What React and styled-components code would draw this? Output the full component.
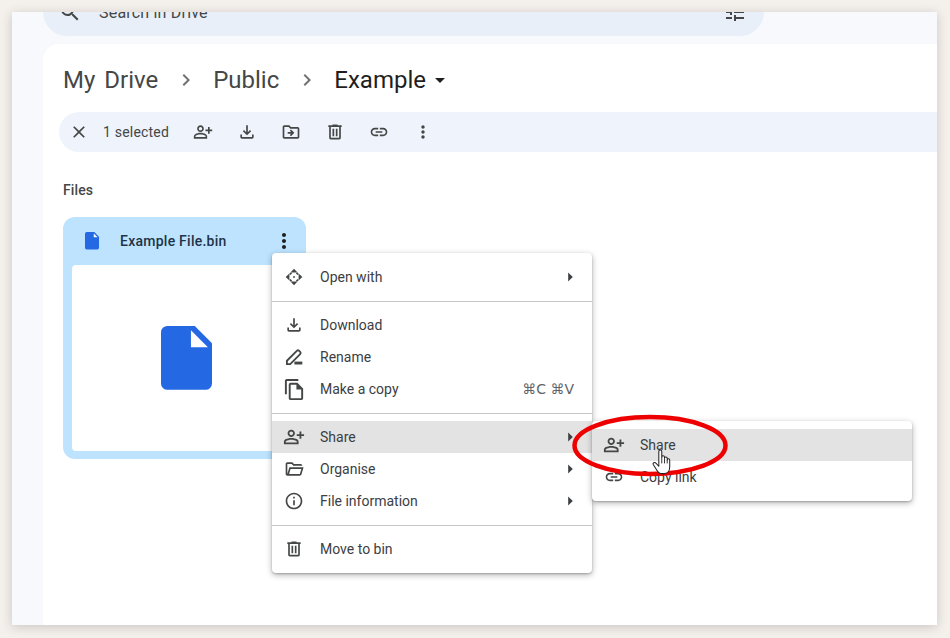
import React from 'react';
import styled, { createGlobalStyle } from 'styled-components';
import {
  MdSearch, MdTune, MdChevronRight, MdArrowDropDown, MdClose, MdOutlinePersonAddAlt,
  MdOutlineFileDownload, MdOutlineDriveFileMove, MdLink, MdMoreVert,
  MdOutlineFileCopy, MdInfoOutline, MdArrowRight,
} from 'react-icons/md';

const GlobalStyle = createGlobalStyle`
  html, body {
    margin: 0;
    padding: 0;
    background: #f4f0ec;
    font-family: Roboto, "Liberation Sans", sans-serif;
    color: #444746;
  }
`;

const Backdrop = styled.div`
  width: 950px;
  height: 638px;
  padding: 12px 13px 13px 12px;
  box-sizing: border-box;
  overflow: hidden;
`;

const Window = styled.div`
  position: relative;
  height: 100%;
  padding-left: 31px;
  box-sizing: border-box;
  background: #f7f9fd;
  box-shadow: 0 2px 10px rgba(60, 50, 40, 0.22);
  overflow: hidden;
`;

const SearchBar = styled.div`
  width: 721px;
  height: 48px;
  margin-top: -24px;
  padding: 0 17px 0 15px;
  box-sizing: border-box;
  display: flex;
  align-items: center;
  gap: 17px;
  border-radius: 24px;
  background: #e9eff9;
  font-size: 16px;
  letter-spacing: 0.2px;
  color: #444746;
  svg { font-size: 24px; flex: none; }
  span { flex: 1; }
`;

const Panel = styled.main`
  margin-top: 8px;
  height: 600px;
  padding: 16px 0 0 20px;
  background: #fff;
  border-top-left-radius: 16px;
`;

const Crumbs = styled.div`
  height: 40px;
  display: flex;
  align-items: center;
  font-size: 24px;
  word-spacing: 3px;
  color: #444746;
`;

const CrumbSep = styled.span`
  display: flex;
  margin: 0 15px 0 16px;
  font-size: 24px;
  color: #6f7271;
`;

const Current = styled.span`
  color: #1f1f1f;
`;

const Caret = styled.span`
  display: flex;
  font-size: 24px;
  margin-left: 2px;
  color: #1f1f1f;
`;

const ActionBar = styled.div`
  height: 40px;
  margin: 12px 0 0 -4px;
  padding-left: 8px;
  display: flex;
  align-items: center;
  background: #eef3fc;
  border-radius: 20px 0 0 20px;
  font-size: 14px;
`;

const Selected = styled.span`
  margin: 0 12px 0 12px;
  width: 66px;
  white-space: nowrap;
  color: #444746;
  letter-spacing: 0.2px;
`;

const ActionIcon = styled.span`
  width: 44px;
  display: flex;
  justify-content: center;
  font-size: 20px;
  color: #444746;
`;

const CloseIcon = styled(ActionIcon)`
  width: 24px;
`;

const SectionTitle = styled.h2`
  margin: 28px 0 17px;
  font-size: 14px;
  line-height: 20px;
  font-weight: 500;
  letter-spacing: 0.1px;
  color: #444746;
`;

const Card = styled.div`
  width: 243px;
  height: 242px;
  padding: 0 9px 8px;
  box-sizing: border-box;
  display: flex;
  flex-direction: column;
  background: #bde3ff;
  border-radius: 12px;
`;

const CardHead = styled.div`
  height: 48px;
  flex: none;
  display: flex;
  align-items: center;
  padding-left: 13px;
  font-size: 14px;
  font-weight: 500;
  letter-spacing: 0.25px;
  color: #1f3347;
  span { flex: 1; margin-left: 21px; }
  > svg:last-child { font-size: 24px; margin-right: 1px; color: #1f1f1f; flex: none; }
`;

const Preview = styled.div`
  flex: 1;
  display: flex;
  align-items: center;
  justify-content: center;
  background: #fff;
  border-radius: 4px;
  padding-left: 3px;
`;

const Menu = styled.div`
  position: absolute;
  left: ${p => p.$left}px;
  top: ${p => p.$top}px;
  width: 320px;
  padding: 8px 0;
  box-sizing: border-box;
  background: #fff;
  border-radius: 4px;
  box-shadow: 0 2px 6px rgba(0, 0, 0, 0.3), 0 1px 2px rgba(0, 0, 0, 0.2);
`;

const Row = styled.div`
  height: 32px;
  display: flex;
  align-items: center;
  padding: 0 16px 0 10px;
  font-size: 14px;
  color: #3c4043;
  background: ${p => (p.$active ? '#e3e3e3' : 'transparent')};
  > span:nth-child(2) { flex: 1; }
`;

const RowIcon = styled.span`
  width: 24px;
  margin-right: 14px;
  display: flex;
  justify-content: center;
  font-size: ${p => p.$size || 20}px;
  color: #444746;
`;

const Arrow = styled.span`
  display: flex;
  font-size: 22px;
  margin-right: -5px;
  color: #3c4043;
`;

const Keys = styled.span`
  font-family: "DejaVu Sans", Roboto, sans-serif;
  font-size: 14px;
  color: #5f6368;
  margin-right: 2px;
`;

const Divider = styled.div`
  height: 1px;
  margin: 8px 0 7px;
  background: #c4c7c5;
`;

const Ring = styled.svg`
  position: absolute;
  left: 558px;
  top: 400px;
  pointer-events: none;
`;

const Pointer = styled.svg`
  position: absolute;
  left: 640px;
  top: 437px;
`;

const FileIcon = ({ size, fold }) => (
  <svg width={size} height={size * 1.25} viewBox="0 0 16 20">
    <path d="M2 0h8.6L16 5.4V18a2 2 0 0 1-2 2H2a2 2 0 0 1-2-2V2a2 2 0 0 1 2-2z" fill="#2468e4" />
    <path d={fold} fill="#fff" />
  </svg>
);

const BinIcon = () => (
  <svg width="1em" height="1em" viewBox="0 -960 960 960" fill="currentColor">
    <path d="M280-120q-33 0-56.5-23.5T200-200v-520h-40v-80h200v-40h240v40h200v80h-40v520q0 33-23.5 56.5T680-120H280Zm400-600H280v520h400v-520ZM360-280h80v-360h-80v360Zm160 0h80v-360h-80v360Z" />
  </svg>
);

const FolderOpenIcon = () => (
  <svg width="1em" height="1em" viewBox="0 -960 960 960" fill="currentColor">
    <path d="M160-160q-33 0-56.5-23.5T80-240v-480q0-33 23.5-56.5T160-800h240l80 80h320q33 0 56.5 23.5T880-640H447l-80-80H160v480l96-320h684L837-217q-8 26-29.5 41.5T760-160H160Zm84-80h516l72-240H316l-72 240Z" />
  </svg>
);

const MoveIcon = () => (
  <svg width="1em" height="1em" viewBox="0 0 24 24" fill="currentColor">
    <path d="M12 2 7.800 6.500h8.400zM12 22l-4.200-4.500h8.400zM2 12l4.500-4.200v8.400zM22 12l-4.500-4.200v8.400z" />
    <path d="M9 7 7 9M15 7l2 2M9 17l-2-2M15 17l2-2" fill="none" stroke="currentColor" strokeWidth="2" />
    <circle cx="12" cy="12" r="1.100" />
  </svg>
);

const RenameIcon = () => (
  <svg width="1em" height="1em" viewBox="0 0 24 24">
    <path d="M3.500 20.500v-4L15.400 4.600a2 2 0 0 1 2.800 0l1.200 1.200a2 2 0 0 1 0 2.800L7.500 20.500z" fill="none" stroke="currentColor" strokeWidth="2.200" />
    <path d="M12.500 17.500h9.500v3.500h-9.500z" fill="currentColor" />
  </svg>
);

const actions = [MdOutlinePersonAddAlt, MdOutlineFileDownload, MdOutlineDriveFileMove, BinIcon, MdLink, MdMoreVert];

function Item({ icon: Icon, label, hint, sub, active, iconSize }) {
  return (
    <Row $active={active}>
      <RowIcon $size={iconSize}><Icon /></RowIcon>
      <span>{label}</span>
      {hint && <Keys>{hint}</Keys>}
      {sub && <Arrow><MdArrowRight /></Arrow>}
    </Row>
  );
}

export default function App() {
  return (
    <React.Fragment>
      <GlobalStyle />
      <Backdrop>
        <Window>
          <SearchBar>
            <MdSearch />
            <span>Search in Drive</span>
            <MdTune />
          </SearchBar>
          <Panel>
            <Crumbs>
              My Drive
              <CrumbSep><MdChevronRight /></CrumbSep>
              Public
              <CrumbSep><MdChevronRight /></CrumbSep>
              <Current>Example</Current>
              <Caret><MdArrowDropDown /></Caret>
            </Crumbs>
            <ActionBar>
              <CloseIcon><MdClose /></CloseIcon>
              <Selected>1 selected</Selected>
              {actions.map((Icon, index) => (
                <ActionIcon key={index}><Icon /></ActionIcon>
              ))}
            </ActionBar>
            <SectionTitle>Files</SectionTitle>
            <Card>
              <CardHead>
                <FileIcon size={14} fold="M10 1.6V6h4.4z" />
                <span>Example File.bin</span>
                <MdMoreVert />
              </CardHead>
              <Preview>
                <FileIcon size={51} fold="M9.4 1.3v5.4h5.3z" />
              </Preview>
            </Card>
          </Panel>

          <Menu $left={260} $top={241}>
            <Item icon={MoveIcon} label="Open with" sub />
            <Divider />
            <Item icon={MdOutlineFileDownload} label="Download" />
            <Item icon={RenameIcon} label="Rename" />
            <Item icon={MdOutlineFileCopy} iconSize={23} label="Make a copy" hint="⌘C ⌘V" />
            <Divider />
            <Item icon={MdOutlinePersonAddAlt} iconSize={22} label="Share" sub active />
            <Item icon={FolderOpenIcon} label="Organise" sub />
            <Item icon={MdInfoOutline} label="File information" sub />
            <Divider />
            <Item icon={BinIcon} label="Move to bin" />
          </Menu>
          <Menu $left={580} $top={409}>
            <Item icon={MdOutlinePersonAddAlt} iconSize={22} label="Share" active />
            <Item icon={MdLink} label="Copy link" />
          </Menu>

          <Ring width="160" height="66" viewBox="0 0 160 66">
            <ellipse cx="80" cy="33.500" rx="75.500" ry="28.500" fill="none" stroke="#ee0000" strokeWidth="4.500" />
          </Ring>
          <Pointer width="21" height="26" viewBox="-0.5 -0.5 18.5 22.5">
            <path
              d="M5.500 13V1.500a1.300 1.300 0 0 1 2.600 0V6.500a1.200 1.200 0 0 1 2.400 0V7.500a1.200 1.200 0 0 1 2.400 0V9a1.100 1.100 0 0 1 2.200 0v6c0 3.500-2 6-5 6H8.500c-2.500 0-4-1.500-5-3.500L.6 13c-.7-1.300 1.200-2.400 2.300-1.200L5.500 14.500z"
              fill="#fff"
              stroke="#222"
              strokeWidth="0.9"
              strokeLinejoin="round"
            />
            <path d="M8.100 6.500V12M10.500 7.500V12M12.900 9V12" fill="none" stroke="#222" strokeWidth="0.8" />
          </Pointer>
        </Window>
      </Backdrop>
    </React.Fragment>
  );
}
